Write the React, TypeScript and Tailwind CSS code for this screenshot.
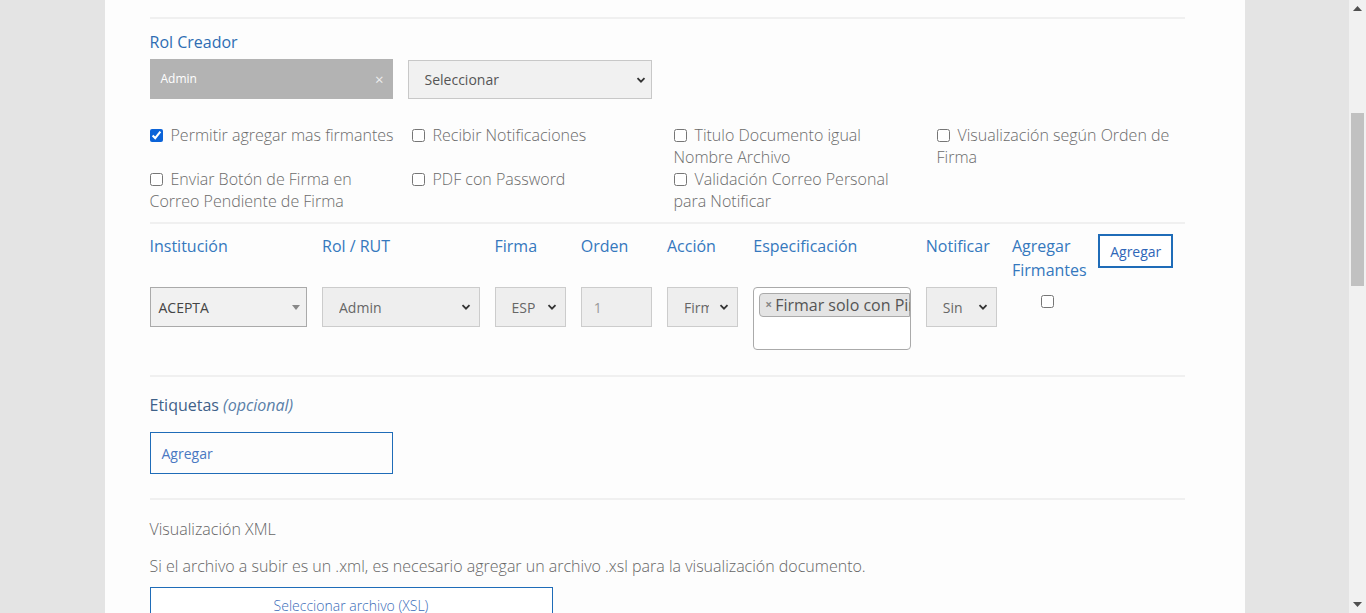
import React from 'react';

const Chevron = () => (
    <svg width="10" height="10" viewBox="0 0 10 10" className="shrink-0">
        <path d="M1.5 3.2 L5 6.7 L8.5 3.2" fill="none" stroke="#333" strokeWidth="1.8" />
    </svg>
);

function FakeSelect({ value, className }: { value: string; className?: string }) {
    return (
        <div className={`flex items-center justify-between gap-[10px] h-[40px] bg-[#eeeeee] border border-[#cccccc] pl-[16px] pr-[8px] overflow-hidden ${className ?? ''}`}>
            <span className="min-w-0 text-[14px] text-[#666] whitespace-nowrap overflow-hidden">{value}</span>
            <Chevron />
        </div>
    );
}

function Check({ checked, label }: { checked?: boolean; label: string }) {
    return (
        <div className="pr-[14px]">
            <input type="checkbox" defaultChecked={checked} className="w-[13px] h-[13px] mr-[8px] align-[-1px] accent-[#0b63d8]" />
            <span>{label}</span>
        </div>
    );
}

function Scrollbar() {
    return (
        <div className="w-[17px] h-[613px] bg-[#f1f1f1] flex flex-col items-center shrink-0">
            <div className="h-[17px] flex items-center justify-center">
                <svg width="9" height="5" viewBox="0 0 9 5"><path d="M0 5 L4.5 0 L9 5Z" fill="#505050" /></svg>
            </div>
            <div className="h-[96px]" />
            <div className="w-[13px] h-[173px] bg-[#c1c1c1]" />
            <div className="flex-1" />
            <div className="h-[17px] flex items-center justify-center">
                <svg width="9" height="5" viewBox="0 0 9 5"><path d="M0 0 L4.5 5 L9 0Z" fill="#505050" /></svg>
            </div>
        </div>
    );
}

export default function App() {
    const head = "text-[16px] leading-[24px] text-[#3578bd]";
    return (
        <div className="flex h-[613px] overflow-hidden bg-[#e4e4e4]" style={{ fontFamily: '"Open Sans", "Liberation Sans", sans-serif' }}>
            <div className="flex-1 flex justify-center">
                <div className="w-[1140px] bg-[#fdfdfd] pl-[45px] pr-[60px] pt-[17px] text-[#6b6b6b]">
                    <div className="border-t-[2px] border-[#f0f0f0]" />

                    {/* Rol creador */}
                    <div className="pt-[11px] text-[16px] leading-[24px] text-[#2f6db3]">Rol Creador</div>
                    <div className="flex gap-[15px] mt-[5px]">
                        <div className="w-[243px] h-[40px] bg-[#b3b3b3] flex items-center justify-between pl-[11px] pr-[9px]">
                            <span className="text-[12px] text-white">Admin</span>
                            <span className="text-[15px] text-[#eeeeee] leading-none">×</span>
                        </div>
                        <div className="w-[244px] h-[39px] mt-[1px] bg-[#f1f1f1] border border-[#c8c8c8] flex items-center justify-between pl-[16px] pr-[5px]">
                            <span className="text-[14px] text-[#555]">Seleccionar</span>
                            <Chevron />
                        </div>
                    </div>

                    {/* opciones */}
                    <div className="grid grid-cols-[262px_262px_263px_1fr] mt-[25px] text-[16px] leading-[22px] font-light">
                        <Check checked label="Permitir agregar mas firmantes" />
                        <Check label="Recibir Notificaciones" />
                        <Check label="Titulo Documento igual Nombre Archivo" />
                        <Check label="Visualización según Orden de Firma" />
                        <Check label="Enviar Botón de Firma en Correo Pendiente de Firma" />
                        <Check label="PDF con Password" />
                        <Check label="Validación Correo Personal para Notificar" />
                        <div />
                    </div>

                    <div className="border-t-[2px] border-[#f0f0f0] mt-[10px]" />

                    {/* firmantes */}
                    <div className="grid grid-cols-12 mt-[10px]">
                        <div className={`col-span-2 pr-[15px] ${head}`}>Institución</div>
                        <div className={`col-span-2 pr-[15px] ${head}`}>Rol / RUT</div>
                        <div className={`pr-[15px] ${head}`}>Firma</div>
                        <div className={`pr-[15px] ${head}`}>Orden</div>
                        <div className={`pr-[15px] ${head}`}>Acción</div>
                        <div className={`col-span-2 pr-[15px] ${head}`}>Especificación</div>
                        <div className={`pr-[15px] ${head}`}>Notificar</div>
                        <div className={`pr-[4px] ${head}`}>Agregar Firmantes</div>
                        <div>
                            <button className="w-[75px] h-[34px] border-[2px] border-[#1f6cb8] text-[14px] text-[#2f66b8] bg-white">Agregar</button>
                        </div>
                    </div>
                    <div className="grid grid-cols-12 mt-[5px] items-start">
                        <div className="col-span-2 pr-[15px]">
                            <div className="h-[40px] bg-[#f1f1f1] border border-[#aaaaaa] flex items-center justify-between pl-[8px] pr-[6px]">
                                <span className="text-[14px] text-[#444]">ACEPTA</span>
                                <svg width="8" height="5" viewBox="0 0 8 5"><path d="M0 0 L8 0 L4 5Z" fill="#888" /></svg>
                            </div>
                        </div>
                        <div className="col-span-2 pr-[15px]"><FakeSelect value="Admin" /></div>
                        <div className="pr-[15px]"><FakeSelect value="ESP" /></div>
                        <div className="pr-[15px]">
                            <div className="h-[40px] bg-[#eeeeee] border border-[#cccccc] flex items-center pl-[12px] text-[14px] text-[#999]">1</div>
                        </div>
                        <div className="pr-[15px]"><FakeSelect value="Firmar" /></div>
                        <div className="col-span-2 pr-[15px]">
                            <div className="h-[63px] bg-white border border-[#aaaaaa] rounded-[4px] pl-[5px] pt-[5px] overflow-hidden">
                                <div className="h-[24px] bg-[#e4e4e4] border border-[#aaaaaa] rounded-l-[4px] flex items-center pl-[5px] whitespace-nowrap text-[16px] text-[#555]">
                                    <span className="text-[12px] text-[#888] mr-[3px] font-bold">×</span>Firmar solo con Pin
                                </div>
                            </div>
                        </div>
                        <div className="pr-[15px]"><FakeSelect value="Sin" /></div>
                        <div className="pr-[15px] flex justify-center pt-[8px]">
                            <input type="checkbox" className="w-[13px] h-[13px]" />
                        </div>
                        <div />
                    </div>

                    <div className="border-t-[2px] border-[#f0f0f0] mt-[25px]" />

                    {/* etiquetas */}
                    <div className="pt-[16px] text-[16px] leading-[24px] text-[#3f6189]">
                        Etiquetas <i className="text-[#5a7fa8]">(opcional)</i>
                    </div>
                    <div className="w-[243px] h-[42px] mt-[15px] border border-[#1f6cb8] flex items-center pl-[11px] text-[14px] text-[#4a78c2]">Agregar</div>

                    <div className="border-t-[2px] border-[#f0f0f0] mt-[24px]" />

                    {/* xml */}
                    <div className="pt-[17px] text-[16px] leading-[24px] text-[#666] font-light">Visualización XML</div>
                    <p className="mt-[13px] text-[16px] leading-[24px] text-[#666] font-light">
                        Si el archivo a subir es un .xml, es necesario agregar un archivo .xsl para la visualización documento.
                    </p>
                    <button className="mt-[9px] w-[403px] h-[36px] border border-[#1f6cb8] text-[14px] text-[#3a6cb8] bg-white font-light">Seleccionar archivo (XSL)</button>
                </div>
            </div>
            <Scrollbar />
        </div>
    );
}
